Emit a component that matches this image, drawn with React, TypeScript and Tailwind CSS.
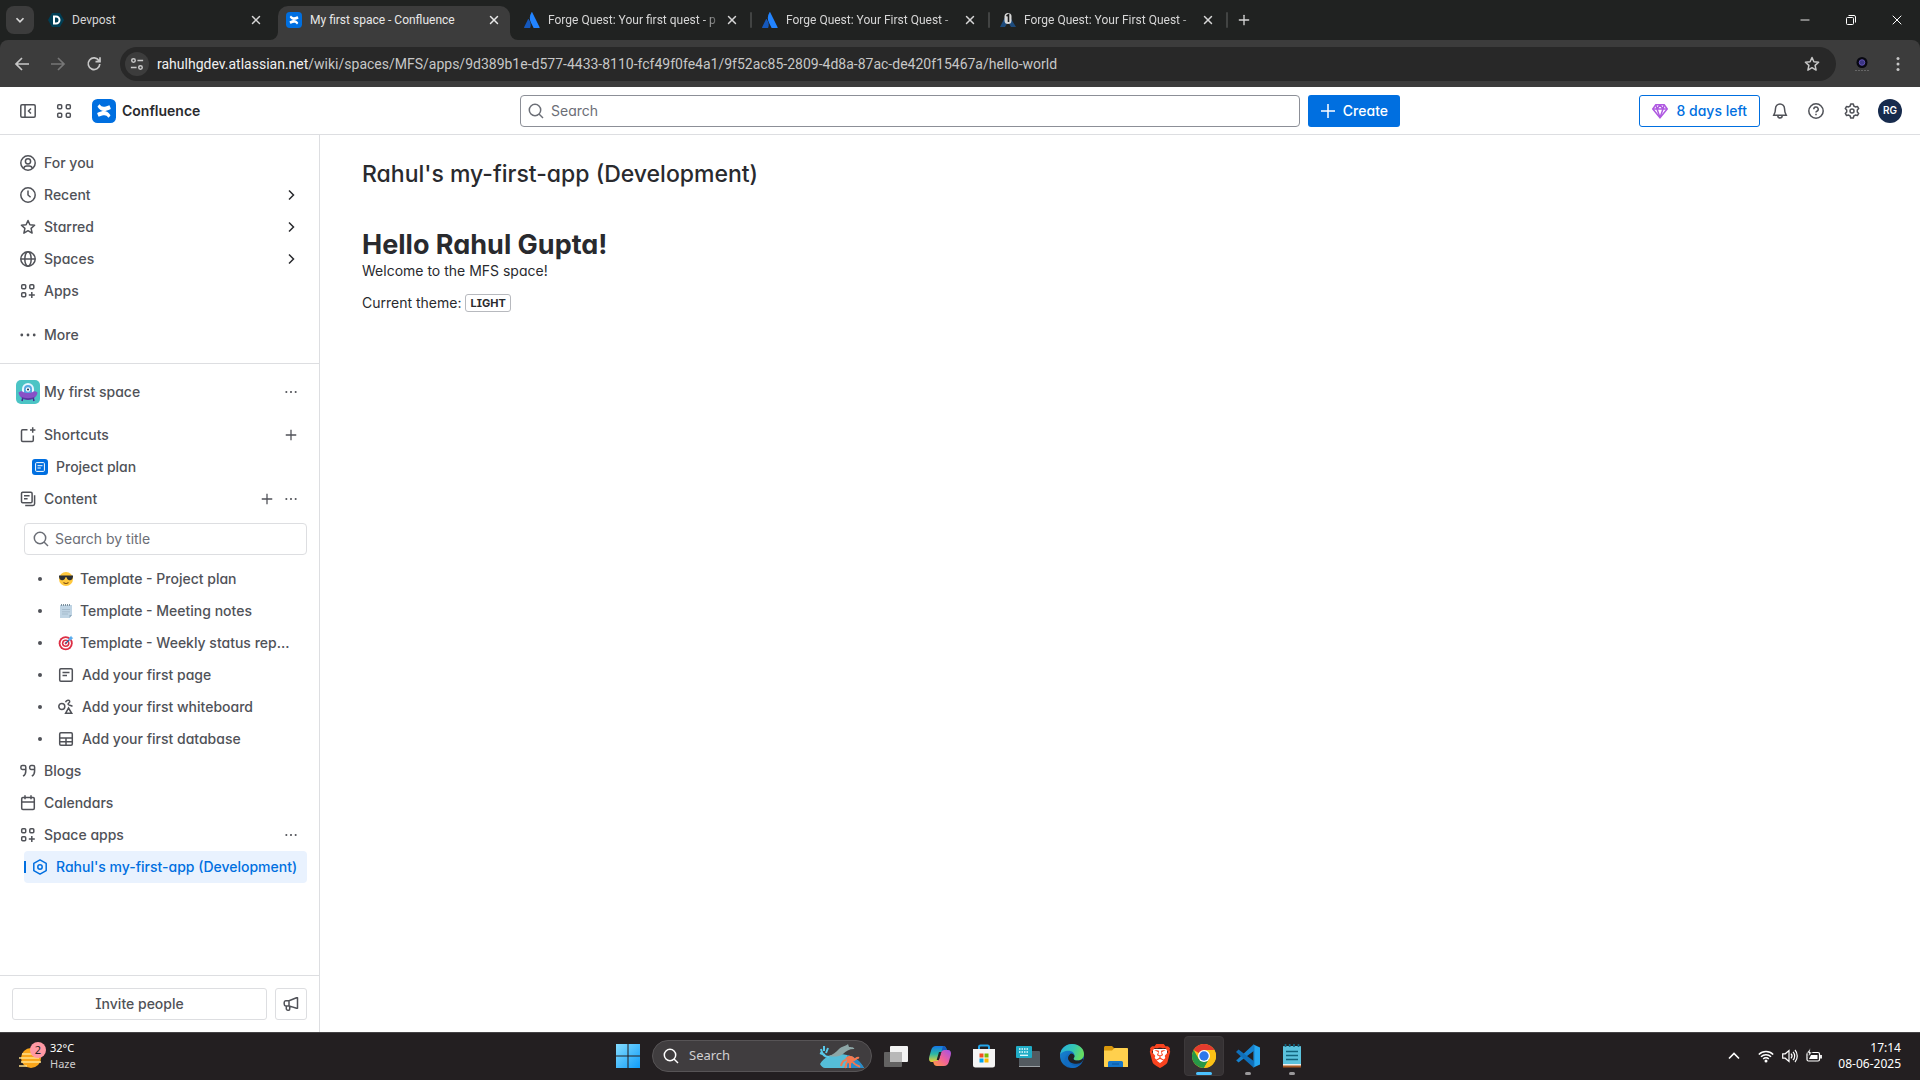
import type { ReactNode } from 'react'
import { Minus, Plus, X } from 'lucide-react'
import { SiBrave } from 'react-icons/si'
import clsx from 'clsx'

interface IconProps {
  className?: string
  children?: ReactNode
}

// 16px outline icon
function Icon({ className = 'size-4', children }: IconProps) {
  return (
    <svg
      viewBox="0 0 16 16"
      fill="none"
      stroke="currentColor"
      strokeWidth="1.5"
      className={clsx('shrink-0', className)}
      aria-hidden="true"
    >
      {children}
    </svg>
  )
}

const SearchIcon = ({ className }: IconProps) => (
  <Icon className={className}>
    <circle cx="7" cy="7" r="5.700" />
    <path d="m11 11 4 4" />
  </Icon>
)

const MoreIcon = ({ className }: IconProps) => (
  <Icon className={className}>
    <g fill="currentColor" stroke="none">
      <circle cx="1.800" cy="8" r="1.400" />
      <circle cx="8" cy="8" r="1.400" />
      <circle cx="14.200" cy="8" r="1.400" />
    </g>
  </Icon>
)

const AddIcon = () => (
  <Icon className="size-3">
    <path d="M8 1v14M1 8h14" strokeWidth="1.7" />
  </Icon>
)

const ChevronIcon = () => (
  <Icon className="size-4 text-[#292a2e]">
    <path d="m6 3.5 4.5 4.5L6 12.5" />
  </Icon>
)

const PersonIcon = () => (
  <Icon>
    <circle cx="8" cy="8" r="7.2" />
    <circle cx="8" cy="6.3" r="2.6" />
    <path d="M3.6 13.6c.4-1.700 1.500-2.500 3-2.500h2.800c1.500 0 2.600.8 3 2.500" />
  </Icon>
)

const ClockIcon = () => (
  <Icon>
    <circle cx="8" cy="8" r="7.200" />
    <path d="M8 3.600V8l2.600 2.200" />
  </Icon>
)

const StarIcon = ({ className }: IconProps) => (
  <Icon className={className}>
    <path
      d="m8 1.500 1.900 4.300 4.700.5-3.500 3.100 1 4.700L8 11.700l-4.100 2.400 1-4.700L1.400 6.300l4.700-.5z"
      strokeLinejoin="round"
    />
  </Icon>
)

const GlobeIcon = () => (
  <Icon>
    <circle cx="8" cy="8" r="7.200" />
    <ellipse cx="8" cy="8" rx="3.200" ry="7.200" />
    <path d="M.8 8h14.400" />
  </Icon>
)

const AppsIcon = () => (
  <Icon>
    <rect x="1.700" y="1.700" width="4" height="4" rx="1" />
    <rect x="9.800" y="1.700" width="4" height="4" rx="1" />
    <rect x="1.700" y="9.800" width="4" height="4" rx="1" />
    <path d="M11.800 9v6M8.800 12h6" />
  </Icon>
)

const GridIcon = () => (
  <Icon>
    <rect x="1.700" y="1.700" width="4" height="4" rx="1" />
    <rect x="10.300" y="1.700" width="4" height="4" rx="1" />
    <rect x="1.700" y="10.300" width="4" height="4" rx="1" />
    <rect x="10.300" y="10.300" width="4" height="4" rx="1" />
  </Icon>
)

const ShortcutIcon = () => (
  <Icon>
    <path d="M7.500 2.700H2.700a1.200 1.200 0 0 0-1.200 1.200v9.400a1.200 1.200 0 0 0 1.200 1.200h9.400a1.200 1.200 0 0 0 1.200-1.200V8.500M12.700.3v5.400M10 3h5.400" />
  </Icon>
)

const PagesIcon = () => (
  <Icon>
    <rect x="1.500" y="1.200" width="10.600" height="10.600" rx="1.200" />
    <path d="M4 4.800h5.600M4 7.700h3.600M14.600 4.200v8.600a1.600 1.600 0 0 1-1.600 1.600H5.200" />
  </Icon>
)

const PageIcon = () => (
  <Icon>
    <rect x="1.700" y="1.700" width="12.600" height="12.600" rx="1.200" />
    <path d="M4.500 5.500h7M4.500 8.500h4.500" />
  </Icon>
)

const WhiteboardIcon = () => (
  <Icon>
    <circle cx="3.800" cy="7.500" r="3" />
    <path d="m10.500 9 3.200 5.300H7.600zM7.500 3.200c1-2.600 4-2.600 4.200-.8.200 1.500-2 1.700-1.600 3 .3 1 2.300.6 4.400 1.900" />
  </Icon>
)

const DatabaseIcon = () => (
  <Icon>
    <rect x="1.700" y="1.700" width="12.600" height="12.600" rx="1.200" />
    <path d="M1.700 7h12.600M1.700 10.700h12.600M8 7v7.300" />
  </Icon>
)

const QuoteIcon = () => (
  <Icon>
    <path d="M5.700 6.500H2.300a1.400 1.400 0 0 1-1.400-1.400V4a1.400 1.400 0 0 1 1.400-1.400h2a1.500 1.500 0 0 1 1.500 1.500V8c0 2.500-.8 4.200-2.800 5.200M14.500 6.500h-3.400a1.400 1.400 0 0 1-1.400-1.400V4a1.400 1.400 0 0 1 1.400-1.400h2a1.500 1.500 0 0 1 1.500 1.500V8c0 2.500-.8 4.200-2.800 5.200" />
  </Icon>
)

const CalendarIcon = () => (
  <Icon>
    <rect x="1.700" y="2.500" width="12.600" height="12" rx="1.200" />
    <path d="M1.700 7h12.600M5 .3v4M11 .3v4" />
  </Icon>
)

const HexIcon = () => (
  <Icon>
    <path d="M8 .9 14.200 4.400v7.200L8 15.100 1.800 11.600V4.400z" strokeLinejoin="round" />
    <circle cx="8" cy="8" r="2.200" />
  </Icon>
)

const MegaphoneIcon = () => (
  <Icon>
    <path
      d="M1.200 6.500c0-1 .5-1.800 1.500-1.800H6l7.500-2.900h1v10.400h-1L6 9.900H2.700c-1 0-1.500-.9-1.500-1.800zM6 4.700v5.200M3.300 9.900v2.800a1.500 1.500 0 0 0 1.500 1.500h.9a1 1 0 0 0 1-1V10"
      strokeLinejoin="round"
    />
  </Icon>
)

const GemIcon = () => (
  <svg viewBox="0 0 16 16" className="size-4" fill="none" stroke="#af59e1" strokeWidth="1.500" strokeLinejoin="round" aria-hidden="true">
    <path d="M3.800 1.700h8.400L15.200 6 8 14.800.8 6z" />
    <path d="M.8 6h14.400M5 6l3 8.500L11 6 8 1.700zM3.800 1.700 5 6M12.200 1.700 11 6" />
  </svg>
)

const SpaceAvatar = () => (
  <svg viewBox="0 0 24 24" className="size-6 shrink-0" aria-hidden="true">
    <rect width="24" height="24" rx="5" fill="#4bc4c5" />
    <path d="m7 17-1 4M17 17l1 4" stroke="#402a8c" strokeWidth="1.500" />
    <path d="M6 12.500V9a6 6 0 0 1 12 0v3.500c-3 1.500-9 1.500-12 0" fill="#e6f6ff" />
    <path d="M8 13V9a4 4 0 0 1 8 0v4c-2 1-6 1-8 0" fill="#55a8e2" />
    <path d="M2.500 12.500C4 11.300 6 11 6.500 11.500c3 2 8 2 11 0 .5-.5 2.500-.2 4 1C21 17 17 19.300 12 19.300S3 17 2.500 12.500" fill="#8850c7" />
    <path d="M5 16.500c3 2.200 11 2.200 14 0-1.500 2.700-4 3.500-7 3.500s-5.500-.8-7-3.500" fill="#5a35a0" />
    <circle cx="12" cy="9.500" r="2.200" fill="#fff" />
    <circle cx="12" cy="9.500" r="1.100" fill="#253858" />
  </svg>
)

const ConfluenceLogo = ({ className = 'size-6' }: IconProps) => (
  <svg viewBox="0 0 24 24" className={clsx('shrink-0', className)} aria-hidden="true">
    <rect width="24" height="24" rx="5.500" fill="#006fe0" />
    <path d="M7.500 5.300c2.300 3 4.200 3.200 9.300 1.100.4-.2.700 0 .8.300l1.100 2.600c.2.400 0 .7-.3.900-6.600 3.100-9.800 2-12.700-2.300-.2-.3-.1-.7.200-.9z" fill="#fff" />
    <path d="M16.500 18.700c-2.300-3-4.200-3.200-9.300-1.100-.4.200-.7 0-.8-.3l-1.100-2.600c-.2-.4 0-.7.300-.9 6.600-3.100 9.800-2 12.700 2.300.2.300.1.700-.2.900z" fill="#fff" />
  </svg>
)

const DevpostIcon = () => (
  <svg viewBox="0 0 16 16" className="size-4 shrink-0" aria-hidden="true">
    <path d="M4 1h8l4 7-4 7H4L0 8z" fill="#003e54" />
    <path d="M6 4.500h2a3.500 3.500 0 0 1 0 7H6z" fill="none" stroke="#fff" strokeWidth="2" />
  </svg>
)

const AtlassianIcon = () => (
  <svg viewBox="0 0 16 16" className="size-4 shrink-0" aria-hidden="true">
    <path d="M4.700 7.300c-.2-.3-.6-.3-.8.100L.1 15.300c-.1.300 0 .7.400.7h5.300c.2 0 .3-.1.400-.2 1.200-2.400.5-6.100-1.500-8.500" fill="#1558bc" />
    <path d="M7.500.4C5.300 3.800 5.400 7.500 6.900 10.500l2.600 5.300c.1.100.3.200.4.200h5.300c.4 0 .6-.4.400-.7L8.300.4c-.2-.4-.6-.4-.8 0" fill="#2284ff" />
  </svg>
)

const ForumIcon = () => (
  <svg viewBox="0 0 16 16" className="size-4 shrink-0" aria-hidden="true">
    <path d="m0 15 4.500-9h6L16 15h-5l-3-5-3 5z" fill="#1d4b7c" />
    <rect x="4.500" y="1" width="7" height="11" rx="3.500" fill="#d8d8d8" />
    <path d="M6.500 4 8.500 2.700V10" fill="none" stroke="#1b1b1b" strokeWidth="1.600" />
  </svg>
)

const tabs = [
  { title: 'Devpost', icon: <DevpostIcon /> },
  { title: 'My first space - Confluence', icon: <ConfluenceLogo className="size-4" />, active: true },
  { title: 'Forge Quest: Your first quest - p', icon: <AtlassianIcon />, faded: true },
  { title: 'Forge Quest: Your First Quest - ', icon: <AtlassianIcon />, faded: true },
  { title: 'Forge Quest: Your First Quest - ', icon: <ForumIcon />, faded: true },
]

function TabStrip() {
  return (
    <div className="flex h-10 items-end bg-[#202221] font-['Roboto',sans-serif] text-xs text-[#d6d6d6]">
      <button aria-label="Search tabs" className="mb-1.5 ml-1.5 grid size-7 place-items-center rounded-lg bg-[#3c3c3c]">
        <Icon className="size-3.5">
          <path d="m4 6 4 4 4-4" strokeWidth="2" />
        </Icon>
      </button>
      <div role="tablist" className="ml-1.5 flex">
        {tabs.map((tab, i) => (
          <div key={i} className="relative mr-1.5 w-[232px]">
            <div
              role="tab"
              aria-selected={!!tab.active}
              className={clsx(
                'flex h-[34px] items-center rounded-t-[10px] pr-2 pb-1.5 pl-2',
                tab.active && 'bg-[#3c3c3c] text-[#e8e8e8]'
              )}
            >
              {tab.icon}
              <span
                className={clsx(
                  'ml-2 flex-1 whitespace-nowrap',
                  tab.faded && '[mask-image:linear-gradient(to_right,black_88%,transparent)]'
                )}
              >
                {tab.title}
              </span>
              <button aria-label="Close tab" className="grid size-4 place-items-center">
                <X className="size-3.5" strokeWidth={2.5} />
              </button>
            </div>
            {tab.active && (
              <>
                <svg viewBox="0 0 8 8" className="absolute bottom-0 -left-2 size-2" aria-hidden="true">
                  <path d="M8 0v8H0a8 8 0 0 0 8-8" fill="#3c3c3c" />
                </svg>
                <svg viewBox="0 0 8 8" className="absolute -right-2 bottom-0 size-2" aria-hidden="true">
                  <path d="M0 0v8h8a8 8 0 0 1-8-8" fill="#3c3c3c" />
                </svg>
              </>
            )}
            {tab.faded && <span className="absolute top-1.5 -right-1 h-4 w-0.5 rounded bg-[#424443]" />}
          </div>
        ))}
      </div>
      <button aria-label="New tab" className="mb-3 ml-1.5 grid size-4 place-items-center">
        <Plus className="size-4" />
      </button>
      <div className="ml-auto flex h-full items-center text-white">
        <button aria-label="Minimize" className="grid w-[46px] place-items-center">
          <Minus className="size-3.5" strokeWidth={1.5} />
        </button>
        <button aria-label="Restore" className="grid w-[46px] place-items-center">
          <svg viewBox="0 0 10 10" className="size-2.5" fill="none" stroke="currentColor" aria-hidden="true">
            <rect x=".5" y="2.500" width="7" height="7" rx="1" />
            <path d="M2.500.5H8A1.500 1.500 0 0 1 9.500 2v5.500" />
          </svg>
        </button>
        <button aria-label="Close" className="grid w-[46px] place-items-center">
          <X className="size-4" strokeWidth={1.5} />
        </button>
      </div>
    </div>
  )
}

function Toolbar() {
  return (
    <div className="bg-[#202221]">
      <div className="flex h-[47px] items-center rounded-t-lg bg-[#3c3c3c] pl-3.5 text-[#c7c7c7]">
        <button aria-label="Back" className="grid w-4 place-items-center">
          <Icon><path d="M15 8H2.500M8 2 2 8l6 6" strokeWidth="1.700" /></Icon>
        </button>
        <button aria-label="Forward" className="ml-5 grid w-4 place-items-center text-[#767676]">
          <Icon><path d="M1 8h12.500M8 2l6 6-6 6" strokeWidth="1.700" /></Icon>
        </button>
        <button aria-label="Reload" className="ml-5 grid w-4 place-items-center">
          <Icon><path d="M13 4.800A5.800 5.800 0 1 0 13.800 8M14 1.200v4.500H9.500" strokeWidth="1.700" /></Icon>
        </button>
        <div className="mx-4.5 flex h-[34px] flex-1 items-center rounded-full bg-[#282828] px-[5px]">
          <button aria-label="Site information" className="grid size-6 place-items-center rounded-full bg-[#3c3c3c]">
            <Icon className="size-3.5">
              <circle cx="4" cy="4" r="2" strokeWidth="1.700" />
              <circle cx="12" cy="12" r="2" strokeWidth="1.700" />
              <path d="M8.500 4H15M1 12h6.500" strokeWidth="1.700" />
            </Icon>
          </button>
          <div className="ml-2 flex-1 font-['Roboto',sans-serif] text-sm whitespace-nowrap">
            <span className="text-[#f0f0f0]">rahulhgdev.atlassian.net</span>
            /wiki/spaces/MFS/apps/9d389b1e-d577-4433-8110-fcf49f0fe4a1/9f52ac85-2809-4d8a-87ac-de420f15467a/hello-world
          </div>
          <button aria-label="Bookmark this page" className="mr-[11px]">
            <StarIcon className="size-4" />
          </button>
        </div>
        <button aria-label="Profile" className="grid w-4 place-items-center">
          <svg viewBox="0 0 16 16" className="size-4" aria-hidden="true">
            <circle cx="8" cy="6.500" r="5.500" fill="#080812" />
            <circle cx="8" cy="6.500" r="2.800" fill="#3b3684" stroke="#6f5cc8" strokeWidth=".8" />
            <path d="M1 14.500h14" stroke="#666" strokeDasharray="2 1" />
          </svg>
        </button>
        <button aria-label="Browser menu" className="mr-3.5 ml-5 grid w-4 place-items-center">
          <Icon>
            <g fill="currentColor" stroke="none">
              <circle cx="8" cy="2.500" r="1.500" />
              <circle cx="8" cy="8" r="1.500" />
              <circle cx="8" cy="13.500" r="1.500" />
            </g>
          </Icon>
        </button>
      </div>
    </div>
  )
}

function Header() {
  return (
    <header className="grid h-12 grid-cols-[1fr_880px_1fr] items-center border-b border-[#dddee1] bg-white text-sm text-[#505258]">
      <div className="flex items-center pl-5">
        <button aria-label="Collapse sidebar">
          <Icon>
            <rect x=".8" y="1.700" width="14.400" height="12.600" rx="1.200" />
            <path d="M5 1.700v12.600M11 5.500 8.500 8l2.500 2.500" />
          </Icon>
        </button>
        <button aria-label="Switch sites or apps" className="ml-5"><GridIcon /></button>
        <a href="#" className="ml-5 flex items-center gap-1.5 font-semibold text-[#292a2e]">
          <ConfluenceLogo />
          Confluence
        </a>
      </div>
      <div className="flex gap-2">
        <label className="flex h-8 flex-1 items-center gap-[7px] rounded-[4px] border border-[#8c8f97] px-[7px] text-[#6b6e76]">
          <SearchIcon className="size-4" />
          <input aria-label="Search" placeholder="Search" className="flex-1 outline-none placeholder:text-[#6b6e76]" />
        </label>
        <button className="flex h-8 items-center gap-[7px] rounded-[3px] bg-[#006fe0] px-3 font-medium text-white">
          <Icon><path d="M8 1v14M1 8h14" strokeWidth="1.500" /></Icon>
          Create
        </button>
      </div>
      <div className="flex items-center justify-end pr-[18px]">
        <button className="flex h-8 items-center gap-[9px] rounded-[3px] border border-[#006fe0] px-3 font-medium whitespace-nowrap text-[#006fe0]">
          <GemIcon />
          8 days left
        </button>
        <button aria-label="Notifications" className="ml-3">
          <Icon>
            <path d="M8 1a4.500 4.500 0 0 0-4.500 4.500c0 3-.5 4.500-1.700 6.700h12.400c-1.200-2.200-1.700-3.700-1.700-6.700A4.500 4.500 0 0 0 8 1M5.800 12.500c0 1.400 1 2.500 2.200 2.500s2.200-1.100 2.200-2.500" />
          </Icon>
        </button>
        <button aria-label="Help" className="ml-5">
          <Icon>
            <circle cx="8" cy="8" r="7.200" />
            <path d="M5.800 6.300A2.200 2.200 0 1 1 8.900 8.200c-.6.300-.9.600-.9 1.300M8 10.800v1.500" />
          </Icon>
        </button>
        <button aria-label="Settings" className="ml-5">
          <Icon>
            <path
              d="M6.700 1h2.600l.5 2 1.600.9 2-.5 1.300 2.200-1.400 1.500v1.800l1.400 1.500-1.300 2.200-2-.5-1.600.9-.5 2H6.700l-.5-2-1.600-.9-2 .5-1.300-2.200 1.400-1.500V7.100L1.300 5.600l1.300-2.200 2 .5L6.200 3z"
              strokeLinejoin="round"
            />
            <circle cx="8" cy="8" r="2" />
          </Icon>
        </button>
        <button aria-label="Account" className="ml-[18px] grid size-6 place-items-center rounded-full bg-[#172b4d] text-[10px] font-semibold text-white">
          RG
        </button>
      </div>
    </header>
  )
}

interface NavRowProps {
  icon: ReactNode
  label: string
  children?: ReactNode
}

function NavRow({ icon, label, children }: NavRowProps) {
  return (
    <div className="flex h-8 items-center pr-5 pl-5">
      <a href="#" className="flex flex-1 items-center gap-2">
        {icon}
        {label}
      </a>
      {children}
    </div>
  )
}

const mainNav = [
  { label: 'For you', icon: <PersonIcon /> },
  { label: 'Recent', icon: <ClockIcon />, expandable: true },
  { label: 'Starred', icon: <StarIcon />, expandable: true },
  { label: 'Spaces', icon: <GlobeIcon />, expandable: true },
  { label: 'Apps', icon: <AppsIcon /> },
]

const templates = [
  {
    label: 'Template - Project plan',
    icon: (
      <svg viewBox="0 0 16 16" className="size-4" aria-hidden="true">
        <circle cx="8" cy="8" r="7" fill="#ffc83d" />
        <path d="M1 4.500h14v1.300c-.3 2.400-1.200 3.400-3.200 3.400-1.800 0-2.800-1-3.200-2.900H7.400C7 8.200 6 9.200 4.200 9.200 2.200 9.200 1.300 8.200 1 5.800z" fill="#2c2f33" />
        <path d="M5.500 11.500c1.500 1.200 3.500 1.200 5 0" fill="none" stroke="#7d4e12" strokeWidth="1.100" />
      </svg>
    ),
  },
  {
    label: 'Template - Meeting notes',
    icon: (
      <svg viewBox="0 0 16 16" className="size-4" aria-hidden="true">
        <path d="M2 2h12v10l-2.500 3H2z" fill="#bfd4e4" />
        <path d="M14 12h-2.500v3z" fill="#8fa9bc" />
        <path d="M3 2h10" stroke="#7c909d" strokeWidth="2" strokeDasharray="1 1" />
        <path d="M4 6.500h8M4 8.800h8M4 11h6" stroke="#9fb6c7" strokeWidth=".8" />
      </svg>
    ),
  },
  {
    label: 'Template - Weekly status rep...',
    icon: (
      <svg viewBox="0 0 16 16" className="size-4" aria-hidden="true">
        <circle cx="7.700" cy="8.300" r="7" fill="#dd2e44" />
        <circle cx="7.700" cy="8.300" r="5.200" fill="#fff" />
        <circle cx="7.700" cy="8.300" r="3.800" fill="#dd2e44" />
        <circle cx="7.700" cy="8.300" r="2.200" fill="#fff" />
        <circle cx="7.700" cy="8.300" r="1.100" fill="#dd2e44" />
        <path d="m7.700 8.300 4-4" stroke="#1c6399" strokeWidth="1.200" />
        <path d="m10.500 3.800 2.700-3 .6 1.500 1.500.6-3 2.700-1.800-.2z" fill="#55acee" />
      </svg>
    ),
  },
]

const starters = [
  { label: 'Add your first page', icon: <PageIcon /> },
  { label: 'Add your first whiteboard', icon: <WhiteboardIcon /> },
  { label: 'Add your first database', icon: <DatabaseIcon /> },
]

const Bullet = () => <span className="mr-4 ml-[38px] size-1 shrink-0 rounded-full bg-[#505258]" />

function Sidebar() {
  return (
    <nav className="flex w-80 shrink-0 flex-col border-r border-[#dddee1] text-sm font-medium text-[#505258]">
      <div className="border-b border-[#dddee1] pt-3 pb-3">
        {mainNav.map((item) => (
          <NavRow key={item.label} icon={item.icon} label={item.label}>
            {item.expandable && (
              <button aria-label={`Expand ${item.label}`}><ChevronIcon /></button>
            )}
          </NavRow>
        ))}
        <div className="mt-3">
          <NavRow icon={<MoreIcon />} label="More" />
        </div>
      </div>

      <div className="flex-1 pt-3">
        <div className="flex h-8 items-center pr-[22px] pl-4">
          <a href="#" className="flex flex-1 items-center gap-1">
            <SpaceAvatar />
            My first space
          </a>
          <button aria-label="Space actions"><MoreIcon className="size-3" /></button>
        </div>
        <div className="mt-[11px]">
          <NavRow icon={<ShortcutIcon />} label="Shortcuts">
            <button aria-label="Add shortcut" className="mr-0.5"><AddIcon /></button>
          </NavRow>
          <a href="#" className="flex h-8 items-center gap-2 pl-8">
            <svg viewBox="0 0 16 16" className="size-4" aria-hidden="true">
              <rect width="16" height="16" rx="3" fill="#006fe0" />
              <rect x="3.600" y="3.600" width="8.800" height="8.800" rx="1" fill="none" stroke="#fff" />
              <path d="M5.500 6.700h5M5.500 9h3.300" stroke="#fff" />
            </svg>
            Project plan
          </a>
          <NavRow icon={<PagesIcon />} label="Content">
            <button aria-label="Create content" className="mr-3"><AddIcon /></button>
            <button aria-label="Content actions" className="mr-0.5"><MoreIcon className="size-3" /></button>
          </NavRow>
        </div>
        <label className="mt-2 mr-3 mb-2 ml-6 flex h-8 items-center gap-1.5 rounded-[4px] border border-[#dddee1] px-2 font-normal text-[#6b6e76]">
          <SearchIcon className="size-4" />
          <input aria-label="Search by title" placeholder="Search by title" className="w-full outline-none placeholder:text-[#6b6e76]" />
        </label>
        <ul>
          {templates.map((item) => (
            <li key={item.label} className="flex h-8 items-center">
              <Bullet />
              <a href="#" className="flex items-center gap-1.5">
                {item.icon}
                {item.label}
              </a>
            </li>
          ))}
          {starters.map((item) => (
            <li key={item.label} className="flex h-8 items-center">
              <Bullet />
              <a href="#" className="flex items-center gap-2">
                {item.icon}
                {item.label}
              </a>
            </li>
          ))}
        </ul>
        <NavRow icon={<QuoteIcon />} label="Blogs" />
        <NavRow icon={<CalendarIcon />} label="Calendars" />
        <NavRow icon={<AppsIcon />} label="Space apps">
          <button aria-label="App actions" className="mr-0.5"><MoreIcon className="size-3" /></button>
        </NavRow>
        <a href="#" className="mr-3 ml-6 flex h-8 items-center rounded-[4px] bg-[#e9f2fe] whitespace-nowrap text-[#006fe0]">
          <span className="mr-1.5 h-3 w-0.5 bg-[#006fe0]" />
          <HexIcon />
          <span className="ml-2">Rahul's my-first-app (Development)</span>
        </a>
      </div>

      <div className="flex gap-2 border-t border-[#dddee1] p-3">
        <button className="h-8 flex-1 rounded-[3px] border border-[#dddee1]">Invite people</button>
        <button aria-label="Give feedback" className="grid size-8 place-items-center rounded-[3px] border border-[#dddee1]">
          <MegaphoneIcon />
        </button>
      </div>
    </nav>
  )
}

function Content() {
  return (
    <main className="flex-1 px-[42px] pt-6 text-sm text-[#292a2e]">
      <h1 className="text-[23px] leading-[30px] font-medium">Rahul's my-first-app (Development)</h1>
      <h2 className="mt-10 text-[27px] leading-8 font-bold">Hello Rahul Gupta!</h2>
      <p className="leading-5">Welcome to the MFS space!</p>
      <p className="mt-3 flex items-center gap-1 leading-5">
        Current theme:
        <span className="rounded-[3px] border border-[#b7b9be] px-1 text-[11px] leading-4 font-bold">LIGHT</span>
      </p>
    </main>
  )
}

const taskApps = [
  {
    name: 'Task view',
    icon: (
      <>
        <rect x="6" y="2" width="18" height="16" rx="1" fill="#f3f3f3" />
        <rect x="0" y="8" width="18" height="15" rx="1" fill="#737373" fillOpacity=".8" />
        <path d="M6 8h12v10H6z" fill="#b8b8b8" />
      </>
    ),
  },
  {
    name: 'Copilot',
    icon: (
      <>
        <defs>
          <linearGradient id="cp1" x1="0" y1="0" x2="0" y2="1">
            <stop offset="0" stopColor="#1577e8" />
            <stop offset=".5" stopColor="#2bb8a4" />
            <stop offset="1" stopColor="#f3d02f" />
          </linearGradient>
          <linearGradient id="cp2" x1="1" y1="0" x2="0" y2="1">
            <stop offset="0" stopColor="#a052e8" />
            <stop offset=".5" stopColor="#f0609b" />
            <stop offset="1" stopColor="#ff9d3f" />
          </linearGradient>
        </defs>
        <path d="M8 2h7c2 0 3 1 3.500 3l.6 2H16c-2 0-2.800.8-3.400 2.800L11 15c-.6 2-1.500 3-3.500 3H4c-2.500 0-3.500-2-2.800-5l2-7C4 3.300 5.500 2 8 2" fill="url(#cp1)" />
        <path d="M16 22H9c-2 0-3-1-3.500-3L5 17h3c2 0 2.800-.8 3.400-2.800L13 9c.6-2 1.500-3 3.500-3H20c2.500 0 3.500 2 2.800 5l-2 7c-.8 2.700-2.300 4-4.800 4" fill="url(#cp2)" />
        <path d="M15 2c2 0 3 1 3.500 3l.4 1h-2.700c-2 0-2.700 1-3.200 3z" fill="#165cbf" />
        <path d="M11 8h2.300l-2.500 8H8.700z" fill="#231f21" />
      </>
    ),
  },
  {
    name: 'Microsoft Store',
    icon: (
      <>
        <path d="M7 6V3a1.500 1.500 0 0 1 1.500-1.500h7A1.500 1.500 0 0 1 17 3v3" fill="none" stroke="#25a5ea" strokeWidth="2" />
        <path d="M1 5h22v16a2.500 2.500 0 0 1-2.500 2.500h-17A2.500 2.500 0 0 1 1 21z" fill="#f4f4f4" />
        <path d="M7.500 9.500h4v4h-4z" fill="#f25022" />
        <path d="M12.500 9.500h4v4h-4z" fill="#7fba00" />
        <path d="M7.500 14.500h4v4h-4z" fill="#00a4ef" />
        <path d="M12.500 14.500h4v4h-4z" fill="#ffb900" />
      </>
    ),
  },
  {
    name: 'Virtual keyboard',
    icon: (
      <>
        <rect x="3" y="7" width="21" height="16" rx="1" fill="#535a60" />
        <path d="M3 22.500h21" stroke="#9da2a6" />
        <rect x="0" y="2" width="16" height="12" rx="1" fill="#20acc6" />
        <path d="M3 5h10M3 8h10" stroke="#e4fbff" strokeWidth="1.400" strokeDasharray="1.500 1" />
        <path d="M4 11.300h8" stroke="#e4fbff" strokeWidth="1.300" />
      </>
    ),
  },
  {
    name: 'Edge',
    icon: (
      <>
        <defs>
          <linearGradient id="ed1" x1="0" y1="0" x2="1" y2=".3">
            <stop offset="0" stopColor="#27aee0" />
            <stop offset=".6" stopColor="#35c7b1" />
            <stop offset="1" stopColor="#65dc61" />
          </linearGradient>
          <linearGradient id="ed2" x1="0" y1="0" x2="1" y2="1">
            <stop offset="0" stopColor="#188cdc" />
            <stop offset="1" stopColor="#0c4f9f" />
          </linearGradient>
        </defs>
        <circle cx="12" cy="12" r="12" fill="url(#ed2)" />
        <path d="M0 11C1 4 6 0 12 0c7 0 12 4.500 12 10 0 4-3 6.500-6.500 6.500-2.500 0-4-.8-4-1.800 0-.8 1-1.200 1-2.700C14.500 9 12 6.800 8.500 6.800 4.500 6.800 1 8.500 0 11" fill="url(#ed1)" />
        <path d="M8 14c0-2 1.400-4 3-4.500 2.200.2 3.500 1.500 3.500 2.800 0 1.200-1 1.700-1 2.500 0 1 1.500 1.800 4 1.800 2 0 4-.6 5.300-2 .5.800.3 1.500-.1 2.200-1.600 2.400-4 3-6 3C12 19.800 8 18 8 14" fill="#202124" />
        <path d="M8 13c-.8 6 4 9.500 9 8.500 2-.4 3.500-1.500 5-3C20 22 16 24 12 24c-4-1-8.500-5-7-9.500C6 11 9 9.500 11 9.500 9.500 10 8.200 11.500 8 13" fill="#126bc0" />
      </>
    ),
  },
  {
    name: 'File Explorer',
    icon: (
      <>
        <path d="M0 3.500C0 2.700.7 2 1.500 2H8l2.500 2.500V9H0z" fill="#d9970b" />
        <path d="M0 6.500h8L10.500 4H23c.6 0 1 .4 1 1v18H1c-.6 0-1-.4-1-1z" fill="#ffd04d" />
        <path d="M4 23v-4.500A1.500 1.500 0 0 1 5.500 17h12a1.500 1.500 0 0 1 1.500 1.500V23z" fill="#1676c9" />
        <path d="M8 20h7" stroke="#0b549b" />
      </>
    ),
  },
  { name: 'Brave', icon: null },
  {
    name: 'Chrome',
    active: true,
    icon: (
      <>
        <circle cx="12" cy="12" r="12" fill="#fbc116" />
        <path d="M12 12 1.600 6A12 12 0 0 1 22.400 6H12z" fill="#e33b2e" />
        <path d="M1.600 6 6.800 15a6 6 0 0 0 5.200 3l-3.500 5.500A12 12 0 0 1 1.600 6" fill="#279847" />
        <path d="m6.800 15 5.200-3 5.200 3L12 24a12 12 0 0 1-3.500-.5z" fill="#279847" />
        <path d="M12 6h10.400A12 12 0 0 1 12 24l5.200-9z" fill="#fbc116" />
        <circle cx="12" cy="12" r="6" fill="#fff" />
        <circle cx="12" cy="12" r="4.700" fill="#2d77ea" />
      </>
    ),
  },
  {
    name: 'Visual Studio Code',
    open: true,
    icon: (
      <>
        <path d="M17.500.5 24 3.500v17l-6.500 3z" fill="#26a7f0" />
        <path d="M17.500.5 1 15.800l-1 .2 2.500 2.500L18 6.800z" fill="#1682cf" />
        <path d="M17.500 23.500 0 8l2.500-2.500L18 17.200z" fill="#0f70bb" />
        <path d="M17.500.5 18 6.800v10.400l-.5 6.300 1.500-.7V1.200z" fill="#1d92df" />
      </>
    ),
  },
  {
    name: 'Notepad',
    open: true,
    icon: (
      <>
        <path d="M3 20h18v3.500H3z" fill="#a95a24" />
        <path d="M3 19h18v2.500H3z" fill="#f0eeea" />
        <path d="M3 3c0-.6.400-1 1-1h16c.6 0 1 .4 1 1v17H3z" fill="#5bc2dd" />
        <path d="M5.500 0v3M9.700 0v3M14 0v3M18.500 0v3" stroke="#156680" strokeWidth="1.700" />
        <path d="M6 7.500h12M6 11.500h12M6 15.500h12" stroke="#12647d" strokeWidth="1.500" />
      </>
    ),
  },
]

function Taskbar() {
  return (
    <footer className="grid h-12 grid-cols-[1fr_auto_1fr] items-center border-t border-[#444244] bg-[#231f21] pb-px font-['Noto_Sans',sans-serif] text-xs text-white">
      <button className="flex items-center gap-1 pl-[18px] text-left text-[11px] leading-4">
        <svg viewBox="0 0 28 28" className="size-7" aria-hidden="true">
          <circle cx="13" cy="16" r="10" fill="#f9a51a" />
          <path d="M4 12h18M1 16h20M3 20h20M1 24h8" stroke="#ffe08a" strokeWidth="1.600" />
          <circle cx="20" cy="8" r="8" fill="#ff99a4" />
          <text x="20" y="12" textAnchor="middle" fontSize="11" fill="#231f21">2</text>
        </svg>
        <span>
          32°C
          <span className="block text-[#cfcdce]">Haze</span>
        </span>
      </button>
      <div className="flex items-center">
        <button aria-label="Start" className="grid w-11 place-items-center">
          <svg viewBox="0 0 23 23" className="size-6" aria-hidden="true">
            <defs>
              <linearGradient id="win" x1="0" y1="0" x2="1" y2="1">
                <stop offset="0" stopColor="#84dcff" />
                <stop offset="1" stopColor="#0f9cf9" />
              </linearGradient>
            </defs>
            <path d="M0 0h11v11H0zM12 0h11v11H12zM0 12h11v11H0zM12 12h11v11H12z" fill="url(#win)" />
          </svg>
        </button>
        <label className="mx-0.5 flex h-8 w-[220px] items-center gap-2.5 rounded-full border border-[#575456] bg-[#403d3f] pr-1.5 pl-2.5">
          <SearchIcon className="size-4" />
          <input aria-label="Search Windows" placeholder="Search" className="w-0 flex-1 text-[13px] outline-none placeholder:text-[#d2d0d1]" />
          <svg viewBox="0 0 46 26" className="h-[26px] w-[46px]" aria-hidden="true">
            <path d="M1 21c5-9 16-12 27-9 9 2 13 7 17 13H6c-2 0-4-2-5-4" fill="#55bdd8" />
            <path d="M28 12c9 2 14 7 17 13H28z" fill="#2a8cc9" />
            <path d="M9 13c5-1 8-4 11-7 3-3 7-3 9-5l1 3c4 0 6 1 5 2-5 0-8 2-11 5-4 3-9 3-15 2" fill="#8da6a6" />
            <path d="M2 6c1 6 4 8 8 8M5 3v5M9 5l-2 5M1 10l5 2" fill="none" stroke="#58c8e8" strokeWidth="2" />
            <path d="M27 16c2-3 7-3 8 1 2-1 3-3 5-2M27 17c-3 0-4 2-5 6M28 19l-2 6M31 20v5M34 19c1 3 4 3 7 5" fill="none" stroke="#f4784f" strokeWidth="2" />
            <circle cx="31" cy="17" r="3.500" fill="#f4784f" />
          </svg>
        </label>
        {taskApps.map((app) => (
          <button
            key={app.name}
            aria-label={app.name}
            className={clsx(
              'relative mx-0.5 grid size-10 place-items-center rounded-[4px] border',
              app.active ? 'border-[#3d393b] bg-[#353133]' : 'border-transparent'
            )}
          >
            {app.icon ? (
              <svg viewBox="0 0 24 24" className="size-6" aria-hidden="true">{app.icon}</svg>
            ) : (
              <span className="grid place-items-center">
                <span className="col-start-1 row-start-1 size-3.5 rounded-b-full bg-white" />
                <SiBrave className="col-start-1 row-start-1 size-6 text-[#f9431f]" />
              </span>
            )}
            {app.active && <span className="absolute bottom-0 h-[3px] w-4 rounded-full bg-[#4cc2ff]" />}
            {app.open && <span className="absolute bottom-0 h-[3px] w-1.5 rounded-full bg-[#9a989a]" />}
          </button>
        ))}
      </div>
      <div className="flex items-center justify-end pr-[19px]">
        <button aria-label="Show hidden icons" className="mr-4">
          <Icon><path d="m3 10.500 5-5 5 5" strokeWidth="1.600" /></Icon>
        </button>
        <button aria-label="Network, volume and battery" className="flex gap-2">
          <Icon>
            <path d="M.8 6.500a10.200 10.200 0 0 1 14.400 0M3 8.800a7 7 0 0 1 10 0M5.200 11a4 4 0 0 1 5.600 0" />
            <circle cx="8" cy="13" r="1.500" fill="currentColor" stroke="none" />
          </Icon>
          <Icon>
            <path d="M.7 5.800h2.500L7 2.500v11l-3.800-3.300H.7zM9 5.700c1.200 1.300 1.200 3.300 0 4.600M11 3.800c2.200 2.300 2.200 6.100 0 8.400M13 2c3 3.300 3 8.700 0 12" strokeWidth="1.200" />
          </Icon>
          <Icon>
            <rect x="1" y="4.500" width="12.500" height="8.500" rx="1.500" strokeWidth="1.200" />
            <path d="M5 7h6.500v4H3z" fill="currentColor" stroke="none" />
            <path d="M15 7v3.500" strokeWidth="1.800" />
            <path d="M4.300 0 .7 5h2.200l-.7 4 4-5H4z" fill="currentColor" stroke="#231f21" strokeWidth=".7" />
          </Icon>
        </button>
        <button className="ml-4 text-right text-xs leading-4">
          <time className="block">17:14</time>
          <time className="block">08-06-2025</time>
        </button>
      </div>
    </footer>
  )
}

export default function App() {
  return (
    <div className="flex min-h-screen flex-col bg-white font-['Inter',sans-serif] [font-feature-settings:'cv08','cv11']">
      <TabStrip />
      <Toolbar />
      <Header />
      <div className="flex flex-1">
        <Sidebar />
        <Content />
      </div>
      <Taskbar />
    </div>
  )
}
